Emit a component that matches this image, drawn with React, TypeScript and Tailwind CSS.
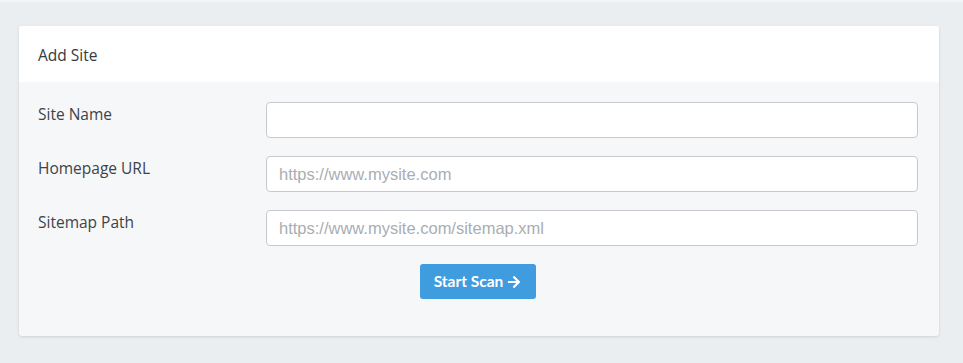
export default function App() {
  const fields = [
    { label: "Site Name", placeholder: "" },
    { label: "Homepage URL", placeholder: "https://www.mysite.com" },
    { label: "Sitemap Path", placeholder: "https://www.mysite.com/sitemap.xml" },
  ];

  return (
    <div className="min-h-[363px] bg-[#ebeef1] border-t-2 border-[#f2f4f6] pt-6 pl-[19px] pr-6 pb-[27px] font-['Open_Sans',sans-serif]">
      <div className="rounded-[3px] bg-[#f6f7f9] shadow-[0_1px_3px_rgba(0,0,0,0.12)] overflow-hidden">
        {/* Header */}
        <div className="h-14 bg-white flex items-center pt-[3px] px-[19px] text-[15.5px] text-[#343a40]">
          Add Site
        </div>

        {/* Form */}
        <div className="pt-5 pl-[19px] pr-[21px] pb-[37px]">
          <div className="flex flex-col gap-[18px]">
            {fields.map((f) => (
              <div key={f.label} className="flex">
                <label className="w-[228px] shrink-0 pt-[1px] text-[15.5px] text-[#3d4349]">
                  {f.label}
                </label>
                <input
                  type="text"
                  placeholder={f.placeholder}
                  className="flex-1 h-9 rounded-[4px] border border-[#c6c9cd] bg-white px-3 text-[16.5px] font-['Liberation_Sans',sans-serif] text-[#495057] placeholder:text-[#a9aeb3] outline-none"
                />
              </div>
            ))}
          </div>

          <div className="flex justify-center mt-[18px]">
            <button className="h-[35px] pl-[14px] pr-[15px] rounded-[3px] bg-[#3f9cde] text-white text-[15.5px] font-bold font-['Lato',sans-serif] flex items-center gap-[4px]">
              Start Scan
              <svg viewBox="0 0 448 512" className="w-[14px] h-[14px]" fill="currentColor">
                <path d="M190.5 66.9l22.2-22.2c9.4-9.4 24.6-9.4 33.9 0L441 239c9.4 9.4 9.4 24.6 0 33.9L246.6 467.3c-9.4 9.4-24.6 9.4-33.9 0l-22.2-22.2c-9.5-9.5-9.3-25 .4-34.3L311.4 296H24c-13.3 0-24-10.7-24-24v-32c0-13.3 10.7-24 24-24h287.4L190.9 101.2c-9.8-9.3-10-24.8-.4-34.3z" />
              </svg>
            </button>
          </div>
        </div>
      </div>
    </div>
  );
}
